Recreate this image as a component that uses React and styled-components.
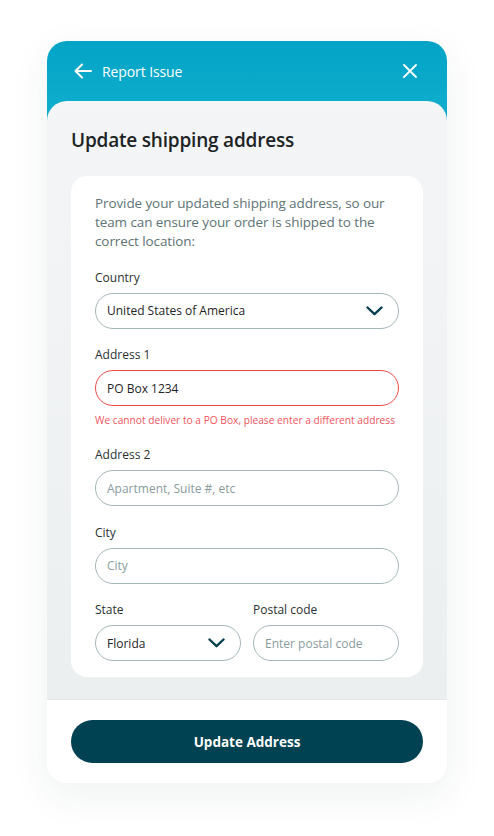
import React from 'react'
import styled, { createGlobalStyle } from 'styled-components'

const GlobalStyle = createGlobalStyle`
    html, body {
        margin: 0;
        padding: 0;
        background: #ffffff;
        font-family: "Open Sans", "Noto Sans", sans-serif;
    }
`

const ArrowLeft = () => (
    <svg width="18" height="16" viewBox="0 0 18 16" fill="none">
        <path d="M17 8H2M8 1.5L1.5 8L8 14.5" stroke="#fff" strokeWidth="2" strokeLinecap="round" strokeLinejoin="round" />
    </svg>
)

const Close = () => (
    <svg width="14" height="14" viewBox="0 0 14 14" fill="none">
        <path d="M1 1L13 13M13 1L1 13" stroke="#fff" strokeWidth="1.8" strokeLinecap="round" />
    </svg>
)

const Chevron = () => (
    <svg width="17" height="10" viewBox="0 0 17 10" fill="none">
        <path d="M1.5 1.5L8.5 8.2L15.5 1.5" stroke="#073f50" strokeWidth="2.4" strokeLinecap="round" strokeLinejoin="round" />
    </svg>
)

const Field = ({ label, value, placeholder, error, select, message }) => (
    <FieldGroup>
        <Label>{label}</Label>
        <InputBox $error={error}>
            {value ? <Value>{value}</Value> : <Placeholder>{placeholder}</Placeholder>}
            {select && <Chevron />}
        </InputBox>
        {message && <ErrorText>{message}</ErrorText>}
    </FieldGroup>
)

const App = () => {
    return (
        <Page>
            <GlobalStyle />
            <Modal>
                <Header>
                    <HeaderLeft>
                        <ArrowLeft />
                        <HeaderTitle>Report Issue</HeaderTitle>
                    </HeaderLeft>
                    <Close />
                </Header>
                <Panel>
                    <Title>Update shipping address</Title>
                    <FormCard>
                        <Intro>
                            Provide your updated shipping address, so our team can ensure your order is shipped to the correct location:
                        </Intro>
                        <Field label="Country" value="United States of America" select />
                        <Field
                            label="Address 1"
                            value="PO Box 1234"
                            error
                            message="We cannot deliver to a PO Box, please enter a different address"
                        />
                        <Field label="Address 2" placeholder="Apartment, Suite #, etc" />
                        <Field label="City" placeholder="City" />
                        <Row>
                            <Field label="State" value="Florida" select />
                            <Field label="Postal code" placeholder="Enter postal code" />
                        </Row>
                    </FormCard>
                </Panel>
                <Footer>
                    <Button>Update Address</Button>
                </Footer>
            </Modal>
        </Page>
    )
}

const Page = styled.div`
    padding: 41px 47px 54px;
`

const Modal = styled.div`
    width: 400px;
    border-radius: 20px;
    overflow: hidden;
    background: linear-gradient(180deg, #03a4c6 0%, #17b2d2 120px, #ffffff 120px);
    box-shadow: 0 12px 40px rgba(30, 50, 60, 0.07);
`

const Header = styled.div`
    height: 60px;
    display: flex;
    align-items: center;
    justify-content: space-between;
    padding: 0 30px 0 27px;
`

const HeaderLeft = styled.div`
    display: flex;
    align-items: center;
    gap: 10px;
`

const HeaderTitle = styled.span`
    color: #ffffff;
    font-size: 14px;
    font-weight: 500;
    letter-spacing: -0.1px;
`

const Panel = styled.div`
    background: linear-gradient(180deg, #f3f5f6 0%, #eceff0 100%);
    border-radius: 20px 20px 0 0;
    padding: 25px 24px 22px;
    border-bottom: 1px solid #e3e8ea;
`

const Title = styled.h2`
    margin: 0 0 22px;
    font-size: 19px;
    line-height: 28px;
    font-weight: 600;
    color: #1d2325;
    letter-spacing: -0.2px;
`

const FormCard = styled.div`
    background: #ffffff;
    border-radius: 16px;
    padding: 18px 24px 16px;
    display: flex;
    flex-direction: column;
    gap: 17.7px;
`

const Intro = styled.p`
    margin: 0;
    font-size: 13.5px;
    line-height: 19px;
    color: #5e7375;
    letter-spacing: -0.1px;
`

const FieldGroup = styled.div`
    display: flex;
    flex-direction: column;
    gap: 6px;
    flex: 1;
    min-width: 0;
`

const Label = styled.span`
    font-size: 12px;
    line-height: 18px;
    color: #2a3133;
    font-weight: 500;
`

const InputBox = styled.div`
    height: 36px;
    box-sizing: border-box;
    border: 1px solid ${(p) => (p.$error ? '#f04848' : '#a3b6b8')};
    border-radius: 18px;
    padding: 0 15px 0 11px;
    display: flex;
    align-items: center;
    justify-content: space-between;
    background: #ffffff;
`

const Value = styled.span`
    font-size: 12px;
    color: #1f2527;
`

const Placeholder = styled.span`
    font-size: 12px;
    color: #8a9c9e;
`

const ErrorText = styled.span`
    font-size: 10.2px;
    line-height: 16px;
    color: #f0545c;
    white-space: nowrap;
`

const Row = styled.div`
    display: flex;
    gap: 12px;
`

const Footer = styled.div`
    background: #ffffff;
    padding: 20px 24px 20px;
`

const Button = styled.button`
    width: 100%;
    height: 43px;
    border: none;
    border-radius: 22px;
    background: #004152;
    color: #ffffff;
    font-family: inherit;
    font-size: 13.5px;
    font-weight: 700;
`

export default App
